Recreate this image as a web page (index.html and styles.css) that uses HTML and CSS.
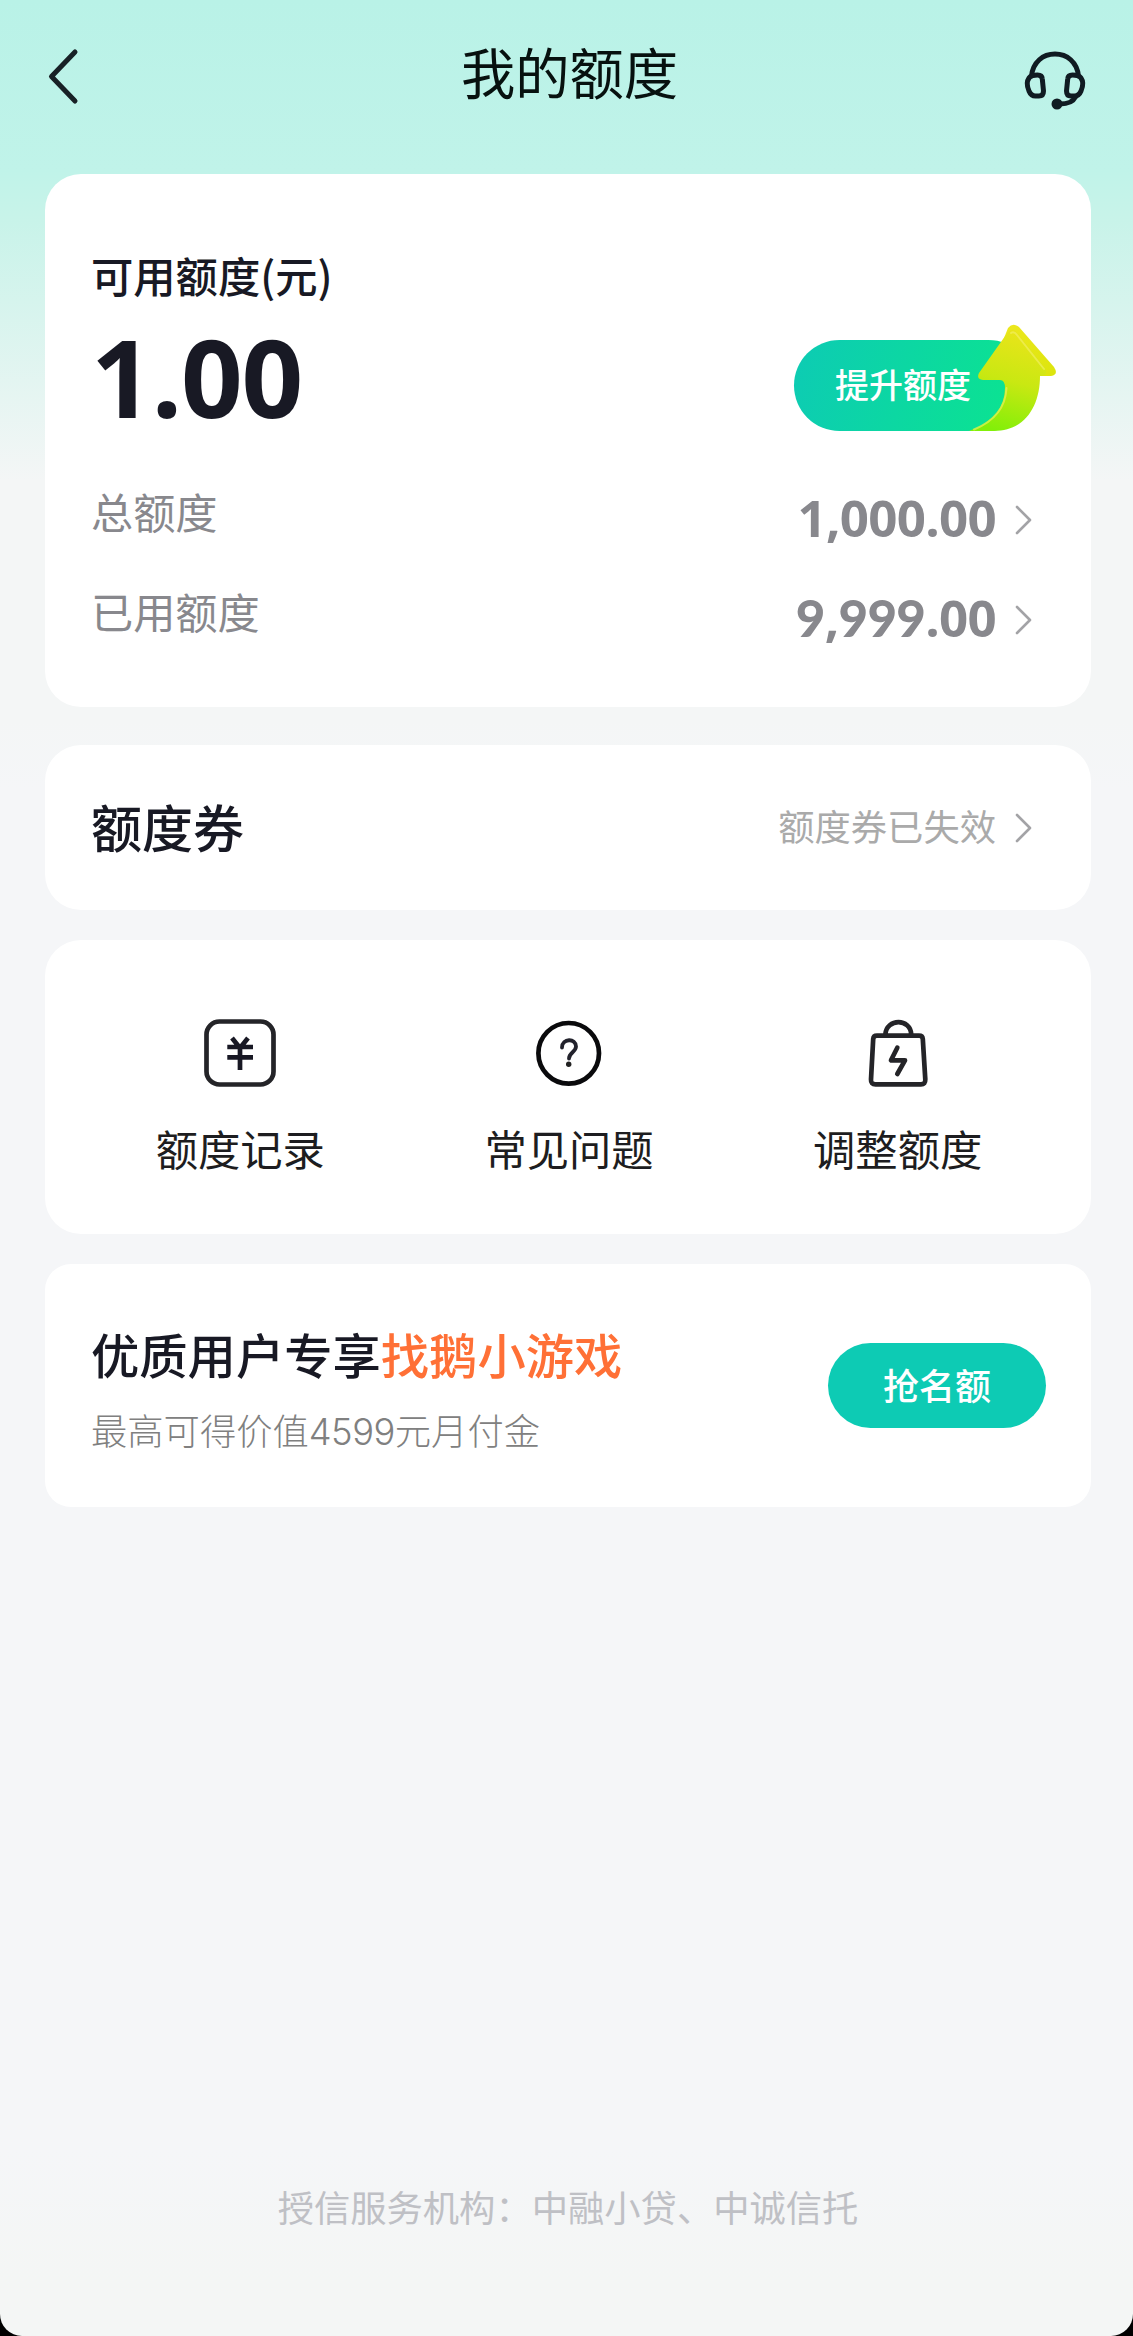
FILE: index.html
```html
<!DOCTYPE html>
<html lang="zh-CN">
<head>
<meta charset="utf-8">
<title>我的额度</title>
<link rel="stylesheet" href="styles.css">
</head>
<body>
<div class="screen">
  <header class="topbar">
    <svg class="back" viewBox="0 0 44 68" aria-hidden="true"><path d="M27 10 3.500 34.500 27 59"/></svg>
    <h1>我的额度</h1>
    <svg class="headset" viewBox="0 0 70 66" aria-hidden="true">
      <path d="M11.500 27C13 13 23 5 35 5s22 8 23.500 22"/>
      <path d="M17.500 26Q22 26 22.300 30L23.500 42Q23.500 47 19 47H15.500Q11 47 9 42 5.500 34 9 29 11 26 17.500 26Z"/>
      <path d="M52.500 26Q48 26 47.700 30L46.500 42Q46.500 47 51 47H54.500Q59 47 61 42 64.500 34 61 29 59 26 52.500 26Z"/>
      <path d="M55.500 48Q52 55 40 55"/><circle cx="37" cy="55" r="5.500"/>
    </svg>
  </header>
  <main>
    <section class="card quota">
      <p class="label">可用额度(元)</p>
      <div class="available">
        <strong>1.00</strong>
        <a class="raise">提升额度
          <svg class="arrow" viewBox="0 0 80 110" aria-hidden="true">
            <defs>
              <linearGradient id="lime" x1="0.600" y1="0" x2="0.400" y2="1"><stop offset="0" stop-color="#eae41a"/><stop offset=".5" stop-color="#c9e812"/><stop offset="1" stop-color="#83ef09"/></linearGradient>
              <linearGradient id="edge" x1="0" y1="0" x2="1" y2="1"><stop offset="0" stop-color="#efe820"/><stop offset="1" stop-color="#dce50d"/></linearGradient>
            </defs>
            <path fill="url(#edge)" d="M31 6Q36 0 42 5L77 45Q82 53 74 54H12Z"/>
            <path fill="url(#lime)" d="M31 10Q36 5 40 10L68 46Q71 53 65 54H63C63 84 48 109 17 109H-8Q28 95 28 66 28 58 23 58H6Q-1 57 2 51Z"/>
            <path class="shine" d="M34 11Q37 9 40 13L67 47M-3 107.500Q28 95 29.500 66"/>
          </svg>
        </a>
      </div>
      <div class="row"><span>总额度</span><b>1,000.00</b><svg class="chev" viewBox="0 0 18 30"><path d="M2 2 15 15 2 28"/></svg></div>
      <div class="row"><span>已用额度</span><b><i>9</i>,<i>999</i>.00</b><svg class="chev" viewBox="0 0 18 30"><path d="M2 2 15 15 2 28"/></svg></div>
    </section>
    <section class="card coupon">
      <h2>额度券</h2><span>额度券已失效</span><svg class="chev" viewBox="0 0 18 30"><path d="M2 2 15 15 2 28"/></svg>
    </section>
    <nav class="card tools">
      <a><svg viewBox="0 0 80 80"><rect x="6.500" y="8.500" width="67" height="63" rx="13"/><path class="yen" d="M32 25 40 35 48 25M40 34V57M27.300 34H53M27.300 44.300H53"/></svg>额度记录</a>
      <a><svg class="dark" viewBox="0 0 80 80"><circle cx="39.700" cy="40.300" r="30.300"/><path class="fine" d="M33 34.500C33 25 47 25 47 33.500 47 39 40 39.500 40 45.500"/><circle class="dot" cx="39.700" cy="51.300" r="2.700"/></svg>常见问题</a>
      <a><svg viewBox="0 0 80 80"><path d="M19 22.700H61Q64.500 22.700 64.800 26L67.300 66.500Q67.500 71.300 63 71.300H17.500Q12.700 71.300 13 66.500L15.200 26Q15.500 22.700 19 22.700ZM27.300 21.500C28.500 5 52.500 5 53.300 21.500M39.300 34.700 33 47.300H47L39.300 61"/></svg>调整额度</a>
    </nav>
    <section class="card promo">
      <div><h3>优质用户专享<em>找鹅小游戏</em></h3><p>最高可得价值<span>4599</span>元月付金</p></div>
      <a class="grab">抢名额</a>
    </section>
  </main>
  <footer>授信服务机构：中融小贷、中诚信托</footer>
</div>
</body>
</html>
```
FILE: styles.css
```css
* { box-sizing: border-box; margin: 0; padding: 0; }
body { background: #000; font-family: "Noto Sans CJK SC", sans-serif; color: #181924; }
svg { fill: none; stroke-linecap: round; stroke-linejoin: round; overflow: visible; flex: none; }
.screen { height: 2336px; display: flex; flex-direction: column; border-radius: 0 0 22px 22px; background: linear-gradient(#b9f2e7 0, #c0f3e9 170px, #c8f3e9 220px, #f4f6f6 480px, #f4f6f6 720px, #f5f6f8 790px, #f5f6f8 2150px, #f4f6f5 2280px); }
.topbar { height: 174px; padding: 0 43px 24px 48px; display: flex; align-items: center; justify-content: space-between; }
.topbar h1 { font-size: 54.300px; font-weight: 400; line-height: 80px; color: #07110f; margin: -8px 0 0 27px; }
.back { width: 44px; height: 68px; stroke: #182126; stroke-width: 5; margin-top: 2px; }
.headset { width: 70px; height: 66px; stroke: #101b22; stroke-width: 5; margin-top: 13px; }
.headset circle { fill: #101b22; stroke: none; }
main { padding: 0 42px 0 45px; }
.card { background: #fff; border-radius: 36px; }
.quota { height: 533px; padding: 70px 59px 0 46px; }
.label { font-size: 42.300px; font-weight: 500; line-height: 62px; }
.available { height: 161px; display: flex; justify-content: space-between; align-items: flex-start; }
.available strong { font: 700 108px/140px "Open Sans", sans-serif; letter-spacing: -1.300px; margin-top: 1px; }
.raise { position: relative; width: 240px; height: 91px; margin: 34px -2px 0 0; border-radius: 46px; background: linear-gradient(105deg, #0dcbb4, #0be391 90%); color: #fff; font-size: 34px; font-weight: 500; line-height: 88px; padding-left: 41px; }
.arrow { position: absolute; left: 183px; top: -18px; width: 80px; height: 110px; }
.shine { stroke: #f4f06a; stroke-width: 2; opacity: .6; }
.row { height: 100px; display: flex; align-items: center; color: #88888d; }
.row span { flex: 1; font-size: 42.200px; line-height: 62px; margin-top: -12px; }
.row b { font: 700 51px/70px "Open Sans", sans-serif; letter-spacing: -.700px; }
.row i { font-family: Lato, sans-serif; font-weight: 900; font-style: normal; }
.chev { width: 18px; height: 30px; margin: 0 -1px 0 19px; stroke: #a3a3a6; stroke-width: 2.600; }
.row .chev { margin-top: 5px; }
.coupon { height: 165px; margin-top: 38px; padding: 0 59px 0 46px; display: flex; align-items: center; }
.coupon h2 { font-size: 51px; font-weight: 500; line-height: 76px; margin-top: -3px; flex: 1; }
.coupon span { font-size: 36.300px; color: #aaa; margin-top: -5px; }
.tools { height: 294px; margin-top: 30px; padding: 73px 29px 0 31px; display: grid; grid-template-columns: repeat(3, 1fr); }
.tools a { display: flex; flex-direction: column; align-items: center; font-size: 42.300px; line-height: 62px; color: #1d1d20; gap: 24px; }
.tools svg { width: 80px; height: 80px; stroke: #242428; stroke-width: 4.700; }
.tools .dark { stroke: #0a0a0c; }
.tools .fine { stroke-width: 3.800; stroke: #22222c; }
.tools .yen { stroke-linecap: butt; stroke: #181824; }
.tools .dot { fill: #222; stroke: none; }
.promo { height: 243px; margin-top: 30px; border-radius: 26px; padding: 6px 45px 0 46px; display: flex; align-items: center; justify-content: space-between; }
.promo h3 { font-size: 48.300px; font-weight: 500; line-height: 70px; }
.promo em { font-style: normal; color: #ff7036; }
.promo p { font-size: 36.300px; font-weight: 300; line-height: 54px; margin-top: 14px; color: #808080; }
.promo p span { font-family: Inter, sans-serif; letter-spacing: -.500px; }
.grab { width: 218px; height: 85px; margin-top: -6px; border-radius: 43px; background: #0dcbb4; color: #fff; font-size: 36px; font-weight: 500; line-height: 83px; text-align: center; }
footer { margin: auto 0 103px; padding-left: 3px; text-align: center; font-size: 36.300px; line-height: 54px; color: #bfc0c5; }
```
